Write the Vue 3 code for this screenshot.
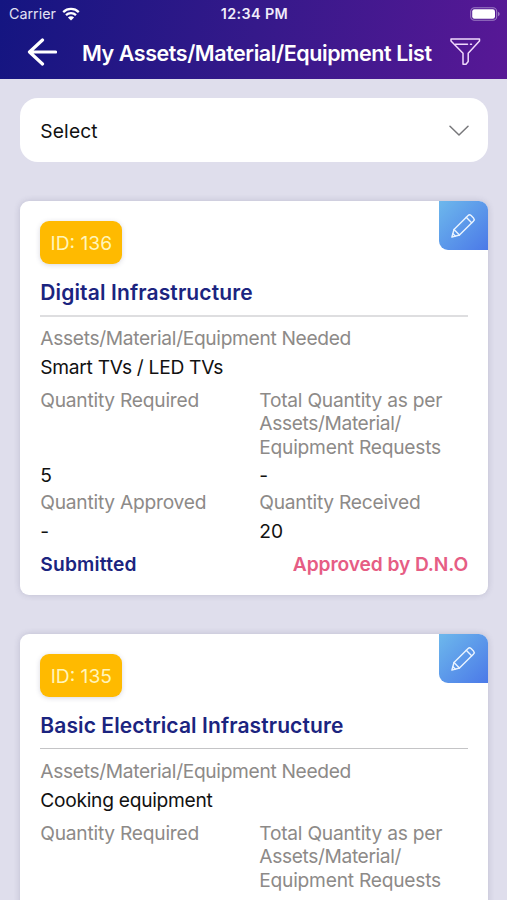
<script setup>
import { ref } from 'vue';

const selected = ref('Select')

const requests = ref([
    {
        id: 136,
        category: 'Digital Infrastructure',
        item: 'Smart TVs / LED TVs',
        required: '5',
        total: '-',
        approved: '-',
        received: '20',
        status: 'Submitted',
        approval: 'Approved by D.N.O'
    },
    {
        id: 135,
        category: 'Basic Electrical Infrastructure',
        item: 'Cooking equipment'
    }
])
</script>

<template>
    <div class="screen">
        <header class="header">
            <div class="status-bar">
                <div class="carrier">
                    <span>Carrier</span>
                    <svg class="wifi" viewBox="0 0 18 14">
                        <path d="M1.2 5.1a11.2 11.2 0 0 1 15.6 0" />
                        <path d="M4 8.1a7.2 7.2 0 0 1 10 0" />
                        <path class="dot" d="M9 13.6L5.9 10.5a4.4 4.4 0 0 1 6.2 0z" />
                    </svg>
                </div>
                <span class="clock">12:34 PM</span>
                <svg class="battery" viewBox="0 0 30 14">
                    <rect class="shell" x="0.7" y="0.7" width="26" height="12.6" rx="3.8" />
                    <rect class="charge" x="2.2" y="2.3" width="22.8" height="9.4" rx="2.2" />
                    <path class="tip" d="M28 4.8c2.2 .8 2.2 3.6 0 4.4z" />
                </svg>
            </div>
            <div class="nav">
                <svg class="back" viewBox="0 0 30 28">
                    <path d="M15.5 2L2.5 14l13 12M3 14H28.5" />
                </svg>
                <h1 class="title">My Assets/Material/Equipment List</h1>
                <svg class="filter" viewBox="0 0 32 30">
                    <path d="M2 2H30.5V4L19.2 16.3V24.5L17 27.3H14V16.3L2 4z" />
                    <path d="M6.5 7.2H18.5M21.5 7.2H22.5" />
                </svg>
            </div>
        </header>

        <main class="content">
            <button class="select">
                <span>{{ selected }}</span>
                <svg class="chevron" viewBox="0 0 20 12">
                    <path d="M1 1.3L10 10L19 1.3" />
                </svg>
            </button>

            <article v-for="request in requests" :key="request.id" class="card">
                <button class="edit" aria-label="edit">
                    <svg viewBox="0 0 28 28">
                        <path d="M2 26L4.3 17.8L19.5 2.6Q21 1.2 22.7 2.7L25.3 5.3Q26.8 7 25.4 8.5L10.2 23.7z" />
                        <path d="M17.5 4.7L23.3 10.5M4.3 17.8L10.2 23.7M3.2 22.3L5.7 24.8" />
                    </svg>
                </button>
                <span class="badge">ID: {{ request.id }}</span>
                <h2 class="category">{{ request.category }}</h2>
                <p class="label needed">Assets/Material/Equipment Needed</p>
                <p class="value">{{ request.item }}</p>
                <div class="quantities">
                    <p class="label">Quantity Required</p>
                    <p class="label">Total Quantity as per<br><span class="tight">Assets/Material/</span><br>Equipment Requests</p>
                    <p v-if="request.required" class="value">{{ request.required }}</p>
                    <p v-if="request.total" class="value">{{ request.total }}</p>
                </div>
                <div v-if="request.received" class="quantities second">
                    <p class="label">Quantity Approved</p>
                    <p class="label">Quantity Received</p>
                    <p class="value">{{ request.approved }}</p>
                    <p class="value">{{ request.received }}</p>
                </div>
                <div v-if="request.status" class="statuses">
                    <span class="submitted">{{ request.status }}</span>
                    <span class="approval">{{ request.approval }}</span>
                </div>
            </article>
        </main>
    </div>
</template>

<style>
body {
    margin: 0;
}
</style>

<style scoped>
.screen {
    box-sizing: border-box;
    height: 100vh;
    overflow: hidden;
    background-color: #dfdeec;
    color: #111;
    font-family: Inter, "Liberation Sans", sans-serif;
    font-size: 19.2px;
    line-height: 23.4px;
}

h1,
h2,
p {
    margin: 0;
}

svg {
    display: block;
    fill: none;
    stroke-linecap: round;
    stroke-linejoin: round;
}

button {
    border: 0;
    font: inherit;
    color: inherit;
}

.header {
    box-sizing: border-box;
    height: 79px;
    background: linear-gradient(100deg, #141581 0%, #35198a 50%, #581896 100%);
    color: #fff;
}

.status-bar {
    display: grid;
    grid-template-columns: 1fr auto 1fr;
    align-items: center;
    height: 27px;
    padding: 0 7px 0 9px;
    font-size: 14.3px;
    line-height: 18px;
}

.carrier {
    display: flex;
    align-items: center;
    gap: 6px;
    color: #e3e1f4;
}

.wifi {
    width: 18px;
    height: 14px;
    stroke: #fff;
    stroke-width: 2.3;
    stroke-linecap: butt;
}

.wifi .dot {
    fill: #fff;
    stroke: none;
}

.clock {
    font-weight: 600;
    letter-spacing: 0.4px;
    color: #f0ecfa;
}

.battery {
    justify-self: end;
    width: 30px;
    height: 14px;
}

.shell {
    stroke: #9c7cc3;
    stroke-width: 1.1;
}

.charge {
    fill: #fff;
}

.tip {
    fill: #9c7cc3;
}

.nav {
    display: flex;
    align-items: center;
    height: 50px;
    padding: 0 26px 0 27px;
}

.back {
    width: 30px;
    height: 28px;
    margin-right: 25px;
    stroke: #fff;
    stroke-width: 3.2;
}

.title {
    flex: 1;
    padding-top: 4px;
    font-size: 21.5px;
    font-weight: 600;
    letter-spacing: -0.44px;
    white-space: nowrap;
}

.filter {
    width: 32px;
    height: 30px;
    stroke: #f0d9fb;
    stroke-width: 1.5;
}

.content {
    display: flex;
    flex-direction: column;
    gap: 39px;
    padding: 19.4px 19.4px 0 20.3px;
}

.select {
    display: flex;
    align-items: center;
    justify-content: space-between;
    height: 64px;
    padding: 2px 19px 0 20px;
    border-radius: 18px;
    background-color: #fff;
    letter-spacing: 0.15px;
}

.chevron {
    width: 20px;
    height: 12px;
    stroke: #77777a;
    stroke-width: 1.5;
}

.card {
    position: relative;
    box-sizing: border-box;
    flex: none;
    height: 394px;
    padding: 19.5px 19.5px 0 20px;
    border-radius: 9px;
    background-color: #fff;
    box-shadow: 0 0 6px rgba(60, 60, 100, 0.2);
}

/* sits in the corner over the card */
.edit {
    position: absolute;
    top: 0;
    right: 0;
    display: grid;
    place-items: center;
    width: 49px;
    height: 49px;
    padding: 0;
    border-radius: 0 9px 0 9px;
    background: linear-gradient(135deg, #6db8ec, #4b79e8);
}

.edit svg {
    width: 26px;
    height: 26px;
    stroke: #eaf4ff;
    stroke-width: 1.5;
}

.badge {
    display: block;
    width: 82px;
    height: 43px;
    border-radius: 9px;
    background-color: #ffba00;
    box-shadow: 0 1px 5px rgba(60, 60, 100, 0.2);
    color: #fff5bb;
    line-height: 44px;
    text-align: center;
}

.category {
    height: 23.5px;
    margin: 17.3px 0 10.2px;
    padding-bottom: 10.2px;
    border-bottom: 2px solid #dedee0;
    color: #1b247f;
    font-size: 21px;
    font-weight: 600;
    letter-spacing: 0.13px;
}

.card:last-child .category {
    margin-bottom: 11.2px;
    border-bottom: 1px solid #c4c4c6;
    letter-spacing: 0.1px;
}

.label {
    color: #8d8a88;
    letter-spacing: -0.24px;
}

.label.needed {
    letter-spacing: -0.33px;
}

.tight {
    letter-spacing: -0.37px;
}

.value {
    margin-top: 5.1px;
    letter-spacing: -0.28px;
}

.quantities .value {
    margin-top: 4.9px;
    letter-spacing: 0;
}

.quantities {
    display: grid;
    grid-template-columns: 219px 1fr;
    margin-top: 9.8px;
}

.quantities.second {
    margin-top: 3.7px;
}

.quantities.second .value {
    margin-top: 5.6px;
}

.statuses {
    display: flex;
    justify-content: space-between;
    margin-top: 9.7px;
    font-weight: 600;
}

.submitted {
    color: #1b247f;
    letter-spacing: 0.2px;
}

.approval {
    color: #e65d84;
    letter-spacing: -0.1px;
}
</style>
